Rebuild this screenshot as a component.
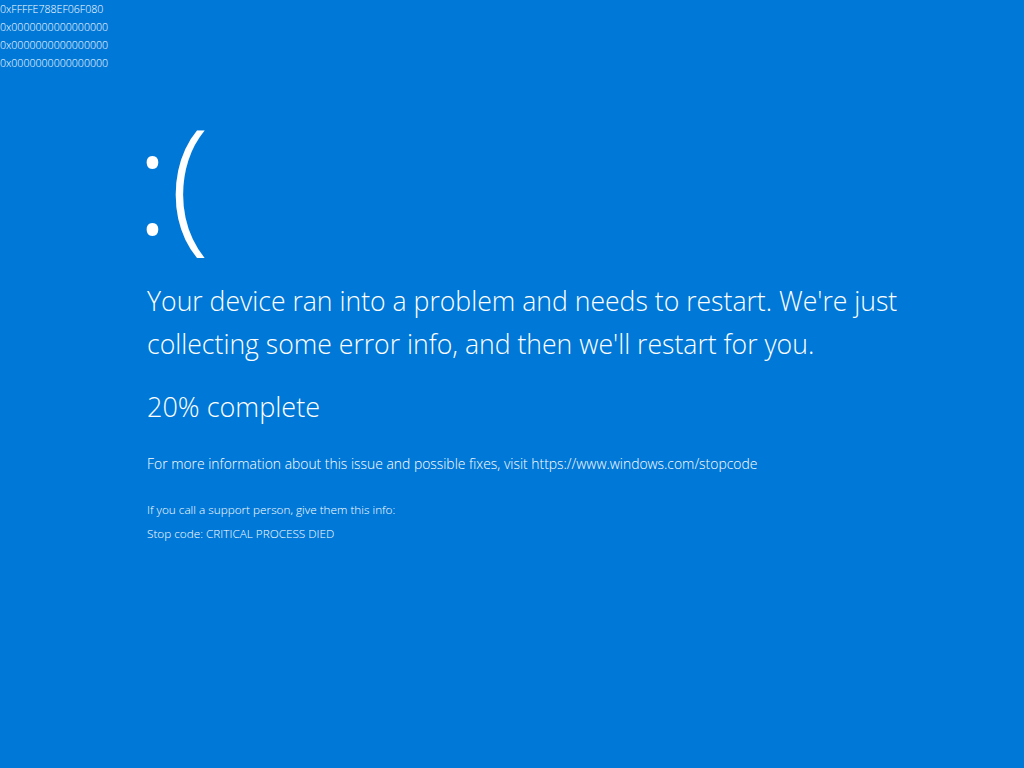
export default function App() {
  const hex = ["0xFFFFE788EF06F080", "0x0000000000000000", "0x0000000000000000", "0x0000000000000000"];
  return (
    <div className="w-[1024px] h-[768px] bg-[#0078d7] text-white overflow-hidden font-['Open_Sans',sans-serif]">
      <div className="text-[10.6px] leading-[18px] font-light">
        {hex.map((h, i) => (
          <div key={i}>{h}</div>
        ))}
      </div>
      <div className="pl-[147px]">
        <div className="mt-[32px] text-[146px] leading-[150px] font-light -ml-[12px] h-[150px]">:(</div>
        <div className="mt-[26px] text-[26.6px] leading-[43px] font-light w-[820px]">
          Your device ran into a problem and needs to restart. We're just collecting some error info, and then we'll restart for you.
        </div>
        <div className="mt-[23px] text-[27px] leading-[36px] font-light">20% complete</div>
        <div className="mt-[30px] text-[13.9px] leading-[18px] font-light">
          For more information about this issue and possible fixes, visit https://www.windows.com/stopcode
        </div>
        <div className="mt-[24px] text-[11.75px] leading-[24px] font-light">
          <div>If you call a support person, give them this info:</div>
          <div>Stop code: CRITICAL PROCESS DIED</div>
        </div>
      </div>
    </div>
  );
}
